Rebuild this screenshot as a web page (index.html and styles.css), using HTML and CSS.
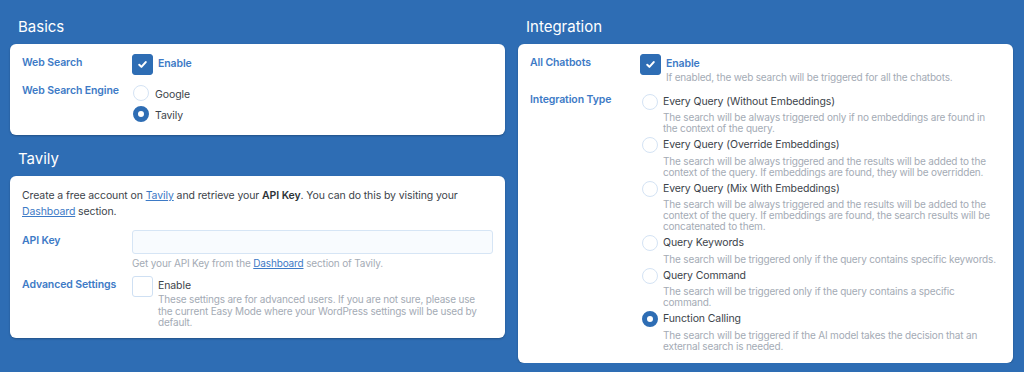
FILE: index.html
```html
<!DOCTYPE html>
<html lang="en">
<head>
    <meta charset="UTF-8">
    <title>Web Search Settings</title>
    <link rel="stylesheet" href="styles.css">
</head>
<body>
    <div class="columns">
        <!-- Left column -->
        <div class="column">
            <h2>Basics</h2>
            <div class="card card-basics">
                <div class="row">
                    <div class="label">Web Search</div>
                    <div class="check">
                        <span class="box checked">
                            <svg viewBox="0 0 12 12"><path d="M3 6.2l2 2 4-4.4"></path></svg>
                        </span>
                        <div class="check-text">
                            <div class="check-title on">Enable</div>
                        </div>
                    </div>
                </div>
                <div class="row">
                    <div class="label">Web Search Engine</div>
                    <div class="radios">
                        <div class="radio"><span class="dot"></span><span class="radio-text">Google</span></div>
                        <div class="radio"><span class="dot selected"></span><span class="radio-text">Tavily</span></div>
                    </div>
                </div>
            </div>

            <h2 class="next">Tavily</h2>
            <div class="card card-tavily">
                <p class="intro">Create a free account on <a href="#">Tavily</a> and retrieve your <b>API Key</b>. You can do this by visiting your <a href="#">Dashboard</a> section.</p>
                <div class="row">
                    <div class="label label-input">API Key</div>
                    <div>
                        <input type="text" class="field">
                        <div class="help">Get your API Key from the <a href="#">Dashboard</a> section of Tavily.</div>
                    </div>
                </div>
                <div class="row row-adv">
                    <div class="label">Advanced Settings</div>
                    <div class="check">
                        <span class="box"></span>
                        <div class="check-text">
                            <div class="check-title">Enable</div>
                            <div class="desc desc-adv">These settings are for advanced users. If you are not sure, please use the current Easy Mode where your WordPress settings will be used by default.</div>
                        </div>
                    </div>
                </div>
            </div>
        </div>

        <!-- Right column -->
        <div class="column">
            <h2>Integration</h2>
            <div class="card card-integration">
                <div class="row">
                    <div class="label">All Chatbots</div>
                    <div class="check">
                        <span class="box checked">
                            <svg viewBox="0 0 12 12"><path d="M3 6.2l2 2 4-4.4"></path></svg>
                        </span>
                        <div class="check-text">
                            <div class="check-title on">Enable</div>
                            <div class="desc">If enabled, the web search will be triggered for all the chatbots.</div>
                        </div>
                    </div>
                </div>
                <div class="row">
                    <div class="label">Integration Type</div>
                    <div class="options">
                        <div class="option">
                            <span class="dot"></span>
                            <div>
                                <div class="option-title">Every Query (Without Embeddings)</div>
                                <div class="desc">The search will be always triggered only if no embeddings are found in the context of the query.</div>
                            </div>
                        </div>
                        <div class="option">
                            <span class="dot"></span>
                            <div>
                                <div class="option-title">Every Query (Override Embeddings)</div>
                                <div class="desc">The search will be always triggered and the results will be added to the context of the query. If embeddings are found, they will be overridden.</div>
                            </div>
                        </div>
                        <div class="option">
                            <span class="dot"></span>
                            <div>
                                <div class="option-title">Every Query (Mix With Embeddings)</div>
                                <div class="desc">The search will be always triggered and the results will be added to the context of the query. If embeddings are found, the search results will be concatenated to them.</div>
                            </div>
                        </div>
                        <div class="option">
                            <span class="dot"></span>
                            <div>
                                <div class="option-title">Query Keywords</div>
                                <div class="desc">The search will be triggered only if the query contains specific keywords.</div>
                            </div>
                        </div>
                        <div class="option">
                            <span class="dot"></span>
                            <div>
                                <div class="option-title">Query Command</div>
                                <div class="desc">The search will be triggered only if the query contains a specific command.</div>
                            </div>
                        </div>
                        <div class="option">
                            <span class="dot selected"></span>
                            <div>
                                <div class="option-title">Function Calling</div>
                                <div class="desc">The search will be triggered if the AI model takes the decision that an external search is needed.</div>
                            </div>
                        </div>
                    </div>
                </div>
            </div>
        </div>
    </div>
</body>
</html>
```

FILE: styles.css
```css
* {
    margin: 0;
    padding: 0;
    box-sizing: border-box;
    font-family: 'Inter', sans-serif;
}

body {
    background-color: #2e6db4;
    color: #3c434a;
    font-size: 10.5px;
    letter-spacing: -0.1px;
    line-height: 16px;
}

.columns {
    display: grid;
    grid-template-columns: 495px 495px;
    gap: 13px;
    padding: 17px 10px 0;
}

h2 {
    color: #fff;
    font-size: 15px;
    font-weight: 400;
    letter-spacing: 0;
    line-height: 20px;
    margin: 0 0 7px 8px;
}

h2.next {
    margin-top: 14px;
}

/* Cards */
.card {
    background: #fff;
    border-radius: 6px;
    padding: 10px 12px 11px;
    box-shadow: 0 1px 2px rgba(0, 0, 0, 0.25);
}

.card-tavily {
    padding: 12px 12px 9px;
}

.card-integration {
    padding: 10px 12px 8px;
}

.row {
    display: grid;
    grid-template-columns: 110px 1fr;
}

.row + .row {
    margin-top: 7px;
}

.label {
    color: #3d7ac6;
    font-weight: 600;
    padding-top: 1px;
}

.label-input {
    padding-top: 4px;
}

/* Checkbox */
.check {
    display: flex;
    gap: 5px;
}

.box {
    flex: none;
    width: 21px;
    height: 21px;
    border: 1px solid #cfe0f3;
    border-radius: 3px;
    display: flex;
    align-items: center;
    justify-content: center;
}

.box.checked {
    background: #2e6db4;
    border-color: #2e6db4;
}

.box svg {
    width: 13px;
    height: 13px;
    fill: none;
    stroke: #fff;
    stroke-width: 1.9;
    stroke-linecap: round;
    stroke-linejoin: round;
}

.check-text {
    padding-top: 2px;
}

.check-title.on {
    color: #3d7ac6;
    font-weight: 600;
}

.desc {
    color: #a4abb5;
    font-size: 10px;
    letter-spacing: -0.18px;
    line-height: 11px;
}

.check-text .desc {
    line-height: 11.5px;
}

.desc-adv {
    max-width: 326px;
}

/* Radios */
.radios {
    display: flex;
    flex-direction: column;
    gap: 3px;
    padding-top: 3px;
}

.radio {
    display: flex;
    gap: 6px;
    margin-left: 1px;
}

.radio-text {
    padding-top: 2px;
}

.dot {
    flex: none;
    width: 16px;
    height: 16px;
    border: 1.5px solid #d4e3f4;
    border-radius: 50%;
}

.dot.selected {
    border: 5px solid #2e6db4;
    background: #fff;
}

.options {
    padding-top: 3px;
    margin-left: 2px;
}

.option {
    display: flex;
    gap: 5px;
    margin-bottom: 3px;
}

.option-title {
    line-height: 16px;
}

.option .desc {
    margin-top: 2.5px;
}

/* Tavily */
.intro {
    margin-bottom: 9px;
    padding-right: 20px;
}

a {
    color: #3d7ac6;
}

b {
    font-weight: 600;
    color: #2c3338;
}

.field {
    display: block;
    width: 100%;
    height: 24px;
    border: 1px solid #d6e5f5;
    border-radius: 3px;
    background: #f8fbfe;
    margin-top: 1px;
}

.help {
    color: #a4abb5;
    font-size: 10px;
    letter-spacing: -0.15px;
    line-height: 14px;
    margin-top: 2px;
}

.help a {
    color: #3d7ac6;
}

.row-adv {
    margin-top: 6px !important;
}
```
